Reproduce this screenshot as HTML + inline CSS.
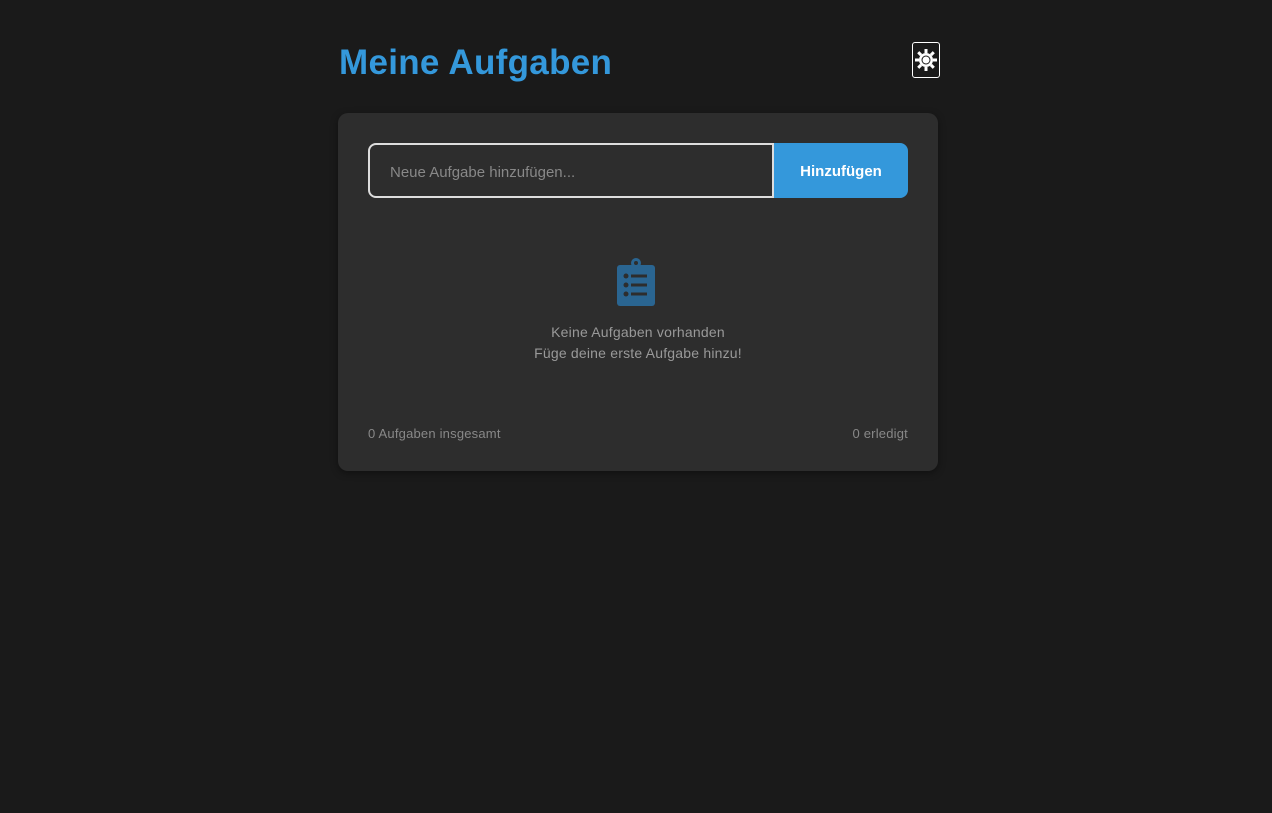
<!DOCTYPE html>
<html><head><meta charset="utf-8"><style>
body{margin:0;background:#1a1a1a;font-family:"Liberation Sans",sans-serif;width:1272px;height:813px;position:relative;overflow:hidden}
h1{position:absolute;left:339px;top:43px;margin:0;font-size:35px;font-weight:bold;color:#3498db;letter-spacing:0.3px}
.tog{position:absolute;left:912px;top:42px;width:28px;height:36px;border:1px solid #fff;border-radius:3px;box-sizing:border-box;background:#1a1a1a}
.card{position:absolute;left:338px;top:113px;width:600px;height:358px;background:#2d2d2d;border-radius:10px;box-shadow:0 2px 8px rgba(0,0,0,.4)}
.inp{position:absolute;left:30px;top:30px;width:406px;height:55px;border:2px solid #ddd;border-radius:8px 0 0 8px;box-sizing:border-box;background:#2d2d2d;color:#888;font-size:15px;line-height:55px;padding-left:20px}
.btn{position:absolute;left:436px;top:30px;width:134px;height:55px;background:#3498db;border-radius:0 8px 8px 0;color:#fff;font-weight:bold;font-size:15px;text-align:center;line-height:57px}
.empty{position:absolute;left:0;width:600px;top:209px;text-align:center;color:#999;font-size:14px;line-height:21px;letter-spacing:0.2px}
.f{position:absolute;top:313px;font-size:13px;color:#888;letter-spacing:0.2px}
</style></head><body>
<h1>Meine Aufgaben</h1>
<div class="tog"><svg width="26" height="34" viewBox="0 0 26 34"><g fill="#fff" transform="translate(13 17)"><circle r="7"/><g id="r"><rect x="-1.5" y="-11" width="3" height="4"/></g><use href="#r" transform="rotate(45)"/><use href="#r" transform="rotate(90)"/><use href="#r" transform="rotate(135)"/><use href="#r" transform="rotate(180)"/><use href="#r" transform="rotate(225)"/><use href="#r" transform="rotate(270)"/><use href="#r" transform="rotate(315)"/><circle r="4.5" fill="#1a1a1a"/><circle r="3.5"/></g></svg></div>
<div class="card">
<div class="inp">Neue Aufgabe hinzufügen...</div>
<div class="btn">Hinzufügen</div>
<svg style="position:absolute;left:279px;top:145px" width="38" height="50" viewBox="0 0 38 50"><g fill="#2a6591"><rect x="0" y="7" width="38" height="41" rx="3"/><circle cx="19" cy="5" r="5"/></g><circle cx="19" cy="5" r="2" fill="#2d2d2d"/><g fill="#2d2d2d"><circle cx="9" cy="18" r="2.5"/><circle cx="9" cy="27" r="2.5"/><circle cx="9" cy="36" r="2.5"/><rect x="14" y="16.5" width="16" height="3"/><rect x="14" y="25.5" width="16" height="3"/><rect x="14" y="34.5" width="16" height="3"/></g></svg>
<div class="empty">Keine Aufgaben vorhanden<br>Füge deine erste Aufgabe hinzu!</div>
<div class="f" style="left:30px">0 Aufgaben insgesamt</div>
<div class="f" style="right:30px">0 erledigt</div>
</div>
</body></html>
